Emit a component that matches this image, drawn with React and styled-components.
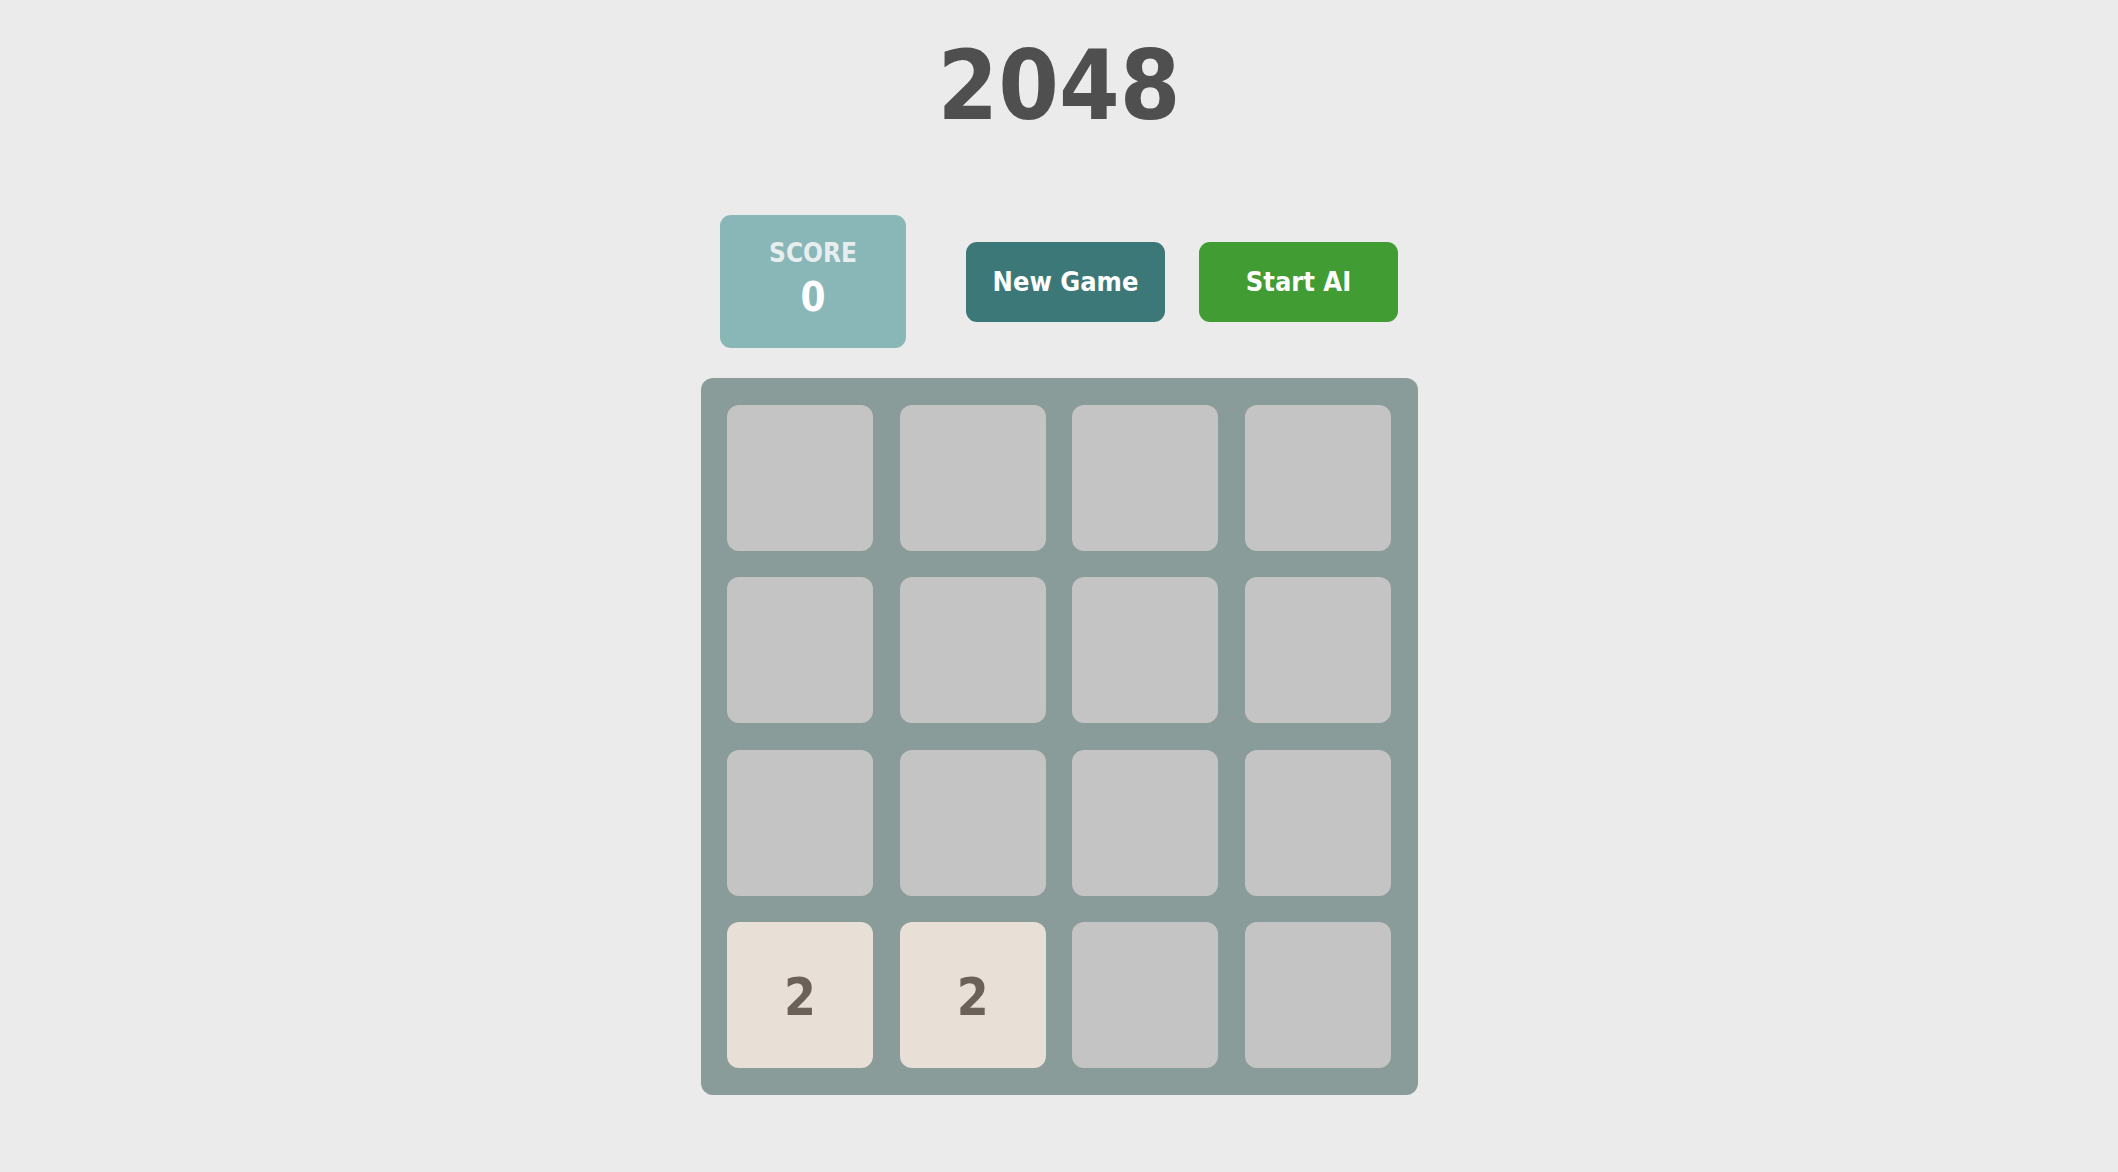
import { useState } from 'react'
import styled, { createGlobalStyle } from 'styled-components'

const GlobalStyle = createGlobalStyle`
html, body {
  margin: 0;
  padding: 0;
  background-color: #ebebeb;
}
body {
  font-family: "DejaVu Sans Condensed", "DejaVu Sans", sans-serif;
  font-stretch: condensed;
}
`

const colors = {
  bg: '#ebebeb',
  title: '#4f4f4f',
  score: '#89b7b7',
  newGame: '#3c7878',
  startAi: '#419c34',
  board: '#8a9c9a',
  empty: '#c4c4c4',
  two: '#e8dfd6',
  twoText: '#6b6158'
}

const startTiles = [
  0, 0, 0, 0,
  0, 0, 0, 0,
  0, 0, 0, 0,
  2, 2, 0, 0
]

const App = () => {
  const [tiles] = useState(startTiles)
  const [score] = useState(0)
  return (
    <Page>
      <GlobalStyle />
      <Title>2048</Title>
      <Controls>
        <ScoreBox>
          <ScoreLabel>SCORE</ScoreLabel>
          <ScoreValue>{score}</ScoreValue>
        </ScoreBox>
        <Button $bg={colors.newGame}>New Game</Button>
        <Button $bg={colors.startAi}>Start AI</Button>
      </Controls>
      <Board>
        {tiles.map((value, i) => (
          <Tile key={i} $value={value}>{value > 0 ? value : ''}</Tile>
        ))}
      </Board>
    </Page>
  )
}

const Page = styled.div`
display: flex;
flex-direction: column;
align-items: center;
min-height: 100vh;
background-color: ${colors.bg};
font-family: "DejaVu Sans Condensed", "DejaVu Sans", sans-serif;
font-stretch: condensed;
font-weight: bold;
`

const Title = styled.h1`
margin: 29px 0 0;
font-size: 97px;
line-height: normal;
font-weight: bold;
color: ${colors.title};
`

const Controls = styled.div`
display: flex;
align-items: center;
justify-content: center;
margin-top: 73px;
`

const ScoreBox = styled.div`
display: flex;
flex-direction: column;
align-items: center;
box-sizing: border-box;
width: 186px;
height: 133px;
padding-top: 25px;
margin-right: 60px;
border-radius: 11px;
background-color: ${colors.score};
`

const ScoreLabel = styled.div`
font-size: 26px;
line-height: 1;
color: #e8eeee;
`

const ScoreValue = styled.div`
margin-top: 11px;
font-size: 40px;
line-height: 1;
color: #ffffff;
`

const Button = styled.button`
width: 199px;
height: 80px;
margin-left: ${props => props.$bg === colors.startAi ? '34px' : '0'};
border: none;
border-radius: 11px;
background-color: ${props => props.$bg};
color: #ffffff;
font-family: inherit;
font-stretch: condensed;
font-weight: bold;
font-size: 27px;
cursor: pointer;
`

const Board = styled.div`
display: grid;
grid-template-columns: repeat(4, 1fr);
grid-auto-rows: 146px;
gap: 26.6px;
box-sizing: border-box;
width: 717px;
padding: 26.5px;
margin-top: 30px;
border-radius: 12px;
background-color: ${colors.board};
`

const Tile = styled.div`
display: flex;
align-items: center;
justify-content: center;
padding-top: 4px;
box-sizing: border-box;
border-radius: 12px;
background-color: ${props => props.$value === 2 ? colors.two : colors.empty};
color: ${colors.twoText};
font-size: 51px;
font-weight: bold;
`

export default App
